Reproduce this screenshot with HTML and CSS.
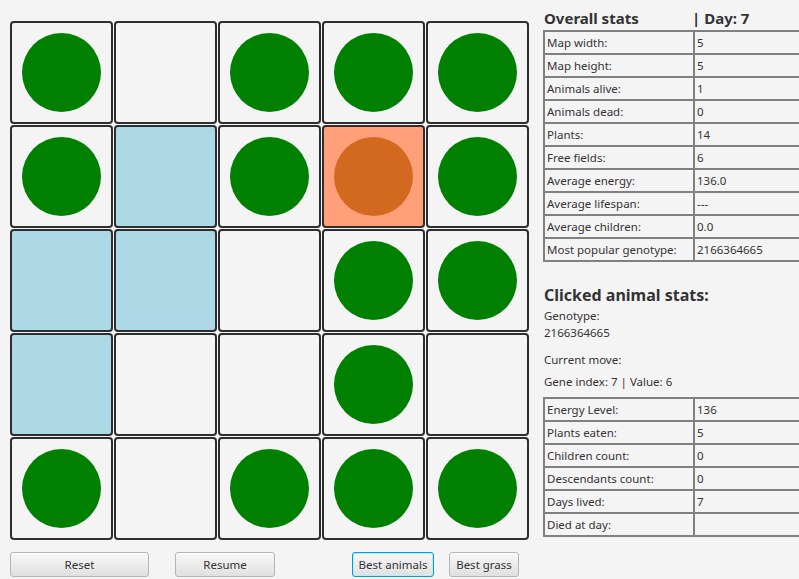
FILE: index.html
```html
<!DOCTYPE html>
<html>
<head>
<meta charset="utf-8">
<link rel="stylesheet" href="styles.css">
</head>
<body>
<div class="app">
  <div class="left">
    <div class="board">
      <div class="cell"><div class="plant"></div></div>
      <div class="cell"></div>
      <div class="cell"><div class="plant"></div></div>
      <div class="cell"><div class="plant"></div></div>
      <div class="cell"><div class="plant"></div></div>

      <div class="cell"><div class="plant"></div></div>
      <div class="cell water"></div>
      <div class="cell"><div class="plant"></div></div>
      <div class="cell selected"><div class="animal"></div></div>
      <div class="cell"><div class="plant"></div></div>

      <div class="cell water"></div>
      <div class="cell water"></div>
      <div class="cell"></div>
      <div class="cell"><div class="plant"></div></div>
      <div class="cell"><div class="plant"></div></div>

      <div class="cell water"></div>
      <div class="cell"></div>
      <div class="cell"></div>
      <div class="cell"><div class="plant"></div></div>
      <div class="cell"></div>

      <div class="cell"><div class="plant"></div></div>
      <div class="cell"></div>
      <div class="cell"><div class="plant"></div></div>
      <div class="cell"><div class="plant"></div></div>
      <div class="cell"><div class="plant"></div></div>
    </div>
    <div class="buttons">
      <button class="btn btn-reset">Reset</button>
      <button class="btn btn-resume">Resume</button>
      <button class="btn btn-animals focused">Best animals</button>
      <button class="btn btn-grass">Best grass</button>
    </div>
  </div>
  <div class="side">
    <div class="head">
      <div class="h-title">Overall stats</div>
      <div class="h-title">| Day: 7</div>
    </div>
    <div class="stats">
      <div class="k">Map width:</div><div class="v">5</div>
      <div class="k">Map height:</div><div class="v">5</div>
      <div class="k">Animals alive:</div><div class="v">1</div>
      <div class="k">Animals dead:</div><div class="v">0</div>
      <div class="k">Plants:</div><div class="v">14</div>
      <div class="k">Free fields:</div><div class="v">6</div>
      <div class="k">Average energy:</div><div class="v">136.0</div>
      <div class="k">Average lifespan:</div><div class="v">---</div>
      <div class="k">Average children:</div><div class="v">0.0</div>
      <div class="k">Most popular genotype:</div><div class="v">2166364665</div>
    </div>
    <div class="sub-title">Clicked animal stats:</div>
    <div class="line l-geno">Genotype:</div>
    <div class="line l-genoval">2166364665</div>
    <div class="line l-move">Current move:</div>
    <div class="line l-gene">Gene index: 7 | Value: 6</div>
    <div class="stats stats2">
      <div class="k">Energy Level:</div><div class="v">136</div>
      <div class="k">Plants eaten:</div><div class="v">5</div>
      <div class="k">Children count:</div><div class="v">0</div>
      <div class="k">Descendants count:</div><div class="v">0</div>
      <div class="k">Days lived:</div><div class="v">7</div>
      <div class="k">Died at day:</div><div class="v"></div>
    </div>
  </div>
</div>
</body>
</html>
```
FILE: styles.css
```css
html, body {
  margin: 0;
  padding: 0;
  background: #f4f4f4;
  width: 799px;
  height: 579px;
  overflow: hidden;
}
body {
  font-family: "Noto Sans", "Open Sans", sans-serif;
  font-size: 11.5px;
  color: #333333;
}
.app {
  display: flex;
  align-items: flex-start;
}
.left {
  width: 533px;
  padding: 21px 0 0 10px;
  flex: none;
}
.board {
  display: grid;
  grid-template-columns: repeat(5, 103px);
  grid-auto-rows: 103px;
  gap: 1px;
}
.cell {
  box-sizing: border-box;
  border: 2px solid #2e2e2e;
  border-radius: 4px;
  background: #f4f4f4;
  display: flex;
  align-items: center;
  justify-content: center;
}
.cell.water { background: #add8e6; }
.cell.selected { background: #ffa07a; }
.plant, .animal {
  width: 79px;
  height: 79px;
  border-radius: 50%;
  background: #008000;
}
.animal { background: #d2691e; }
.buttons {
  display: flex;
  margin-top: 12px;
}
.btn {
  box-sizing: border-box;
  height: 25px;
  padding: 0;
  font-family: inherit;
  font-size: 11.5px;
  color: #333;
  border: 1px solid #b5b5b5;
  border-radius: 3px;
  background: linear-gradient(#f8f8f8, #e0e0e0);
  box-shadow: inset 0 1px 0 #ffffff;
}
.btn-reset { width: 139px; }
.btn-resume { width: 100px; margin-left: 26px; }
.btn-animals { width: 82px; margin-left: 77px; }
.btn-grass { width: 70px; margin-left: 15px; }
.btn.focused {
  border-color: #039ed3;
  box-shadow: inset 0 0 0 1px #bfe6f5;
}
.side {
  flex: none;
  width: 256px;
  overflow: hidden;
  padding-top: 8px;
}
.head {
  display: grid;
  grid-template-columns: 148px 100px;
  height: 20px;
  align-items: center;
}
.h-title {
  font-weight: bold;
  font-size: 15px;
  padding-left: 1px;
  white-space: nowrap;
}
.stats {
  margin-top: 2px;
  display: grid;
  grid-template-columns: 148px 148px;
  grid-auto-rows: 21px;
  gap: 2px;
  padding: 2px;
  background: #808080;
  width: max-content;
}
.k, .v {
  background: #f4f4f4;
  padding-left: 2px;
  display: flex;
  align-items: center;
  white-space: nowrap;
}
.sub-title {
  font-weight: bold;
  font-size: 16px;
  margin-top: 22px;
  height: 22px;
  line-height: 22px;
  padding-left: 1px;
}
.line {
  padding-left: 1px;
  line-height: 17px;
}
.l-geno { margin-top: 1px; }
.l-move { margin-top: 10px; }
.l-gene { margin-top: 5px; }
.stats2 { margin-top: 7px; }
```
